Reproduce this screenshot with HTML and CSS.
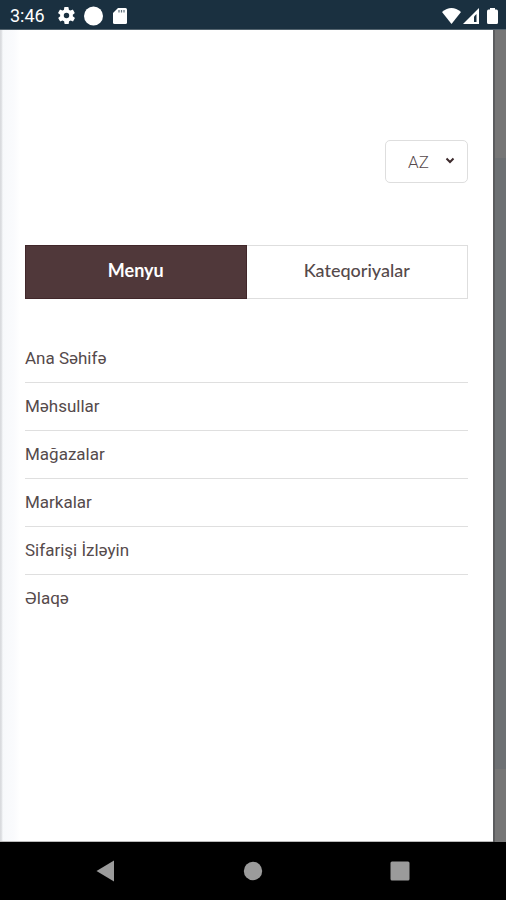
FILE: index.html
```html
<!DOCTYPE html>
<html lang="az">
<head>
<meta charset="utf-8">
<meta name="viewport" content="width=device-width, initial-scale=1">
<title>Menyu</title>
<link rel="stylesheet" href="styles.css">
</head>
<body>
<header class="status">
  <div class="status-group">
    <time class="clock">3:46</time>
    <svg class="gear" viewBox="2 2 20 20" width="17" height="17" aria-hidden="true"><path fill="#fff" d="M19.4 13a7.500 7.500 0 0 0 0-2l2.100-1.600a.5.5 0 0 0 .1-.6l-2-3.500a.5.5 0 0 0-.6-.2l-2.500 1a7.300 7.300 0 0 0-1.700-1l-.4-2.600a.5.5 0 0 0-.5-.5h-4a.5.5 0 0 0-.5.4l-.4 2.700a7.300 7.300 0 0 0-1.700 1l-2.500-1a.5.5 0 0 0-.6.2l-2 3.500a.5.5 0 0 0 .1.600L4.600 11a7.500 7.500 0 0 0 0 2l-2.100 1.600a.5.5 0 0 0-.1.600l2 3.500c.1.200.4.300.6.200l2.500-1c.5.400 1.100.7 1.700 1l.4 2.600c0 .3.200.5.500.5h4c.3 0 .5-.2.500-.4l.4-2.700a7.300 7.300 0 0 0 1.700-1l2.500 1c.2.100.5 0 .6-.2l2-3.500a.5.5 0 0 0-.1-.6zM12 15.200a3.200 3.200 0 1 1 0-6.400 3.200 3.200 0 0 1 0 6.400z"/></svg>
    <svg viewBox="0 0 20 20" width="20" height="20" aria-hidden="true"><circle cx="9.500" cy="10" r="9.500" fill="#fff"/></svg>
    <svg viewBox="0 0 14 16" width="14" height="16" aria-hidden="true"><path fill="#fff" d="M5 0h7.500Q14 0 14 1.500v13q0 1.500-1.500 1.500h-11Q0 16 0 14.500V5z"/><path stroke="#1a3040" stroke-opacity=".7" stroke-width="1.200" d="M6 2v2.500M8.500 2v2.500M11 2v2.500"/></svg>
  </div>
  <div class="status-group right">
    <svg viewBox="0 0 19 16" width="19" height="16" aria-hidden="true"><path fill="#fff" d="M0 4Q9.500-4 19 4L9.500 16z"/></svg>
    <svg viewBox="0 0 16 16" width="16" height="16" aria-hidden="true"><path fill="#fff" d="M0 16 16 0v16z"/><path fill="#1a3040" d="M11 8.500 13.500 6v8H11z"/></svg>
    <svg class="battery" viewBox="0 0 11 16" width="11" height="16" aria-hidden="true"><path fill="#fff" d="M3 0h5v1.500h1.500Q11 1.500 11 3.500v11Q11 16 9.500 16h-8Q0 16 0 14.500v-11Q0 1.500 1.500 1.500H3z"/></svg>
  </div>
</header>
<main class="screen">
  <section class="drawer">
    <div class="language">
      <select class="language-select" aria-label="Dil"><option>AZ</option></select>
      <svg class="chevron" viewBox="0 0 10 7" width="10" height="7" aria-hidden="true"><path d="M1.500 1.500 5 5l3.500-3.500" fill="none" stroke="#3d2a2c" stroke-width="2"/></svg>
    </div>
    <div class="tabs">
      <button class="tab active" type="button">Menyu</button>
      <button class="tab" type="button">Kateqoriyalar</button>
    </div>
    <nav class="menu">
      <a href="#">Ana Səhifə</a>
      <a href="#">Məhsullar</a>
      <a href="#">Mağazalar</a>
      <a href="#">Markalar</a>
      <a href="#">Sifarişi İzləyin</a>
      <a href="#">Əlaqə</a>
    </nav>
  </section>
  <div class="backdrop"></div>
</main>
<footer class="navbar">
  <button type="button" aria-label="Geri"><svg viewBox="0 0 20 22" width="20" height="22"><path fill="#9b9b9b" d="M.5 11 18 .5v21z"/></svg></button>
  <button type="button" aria-label="Ev"><svg viewBox="0 0 20 20" width="20" height="20"><circle cx="10" cy="10" r="9.200" fill="#9b9b9b"/></svg></button>
  <button type="button" aria-label="Son"><svg viewBox="0 0 20 20" width="20" height="20"><rect x=".5" y=".5" width="19" height="19" rx="1.500" fill="#9b9b9b"/></svg></button>
</footer>
</body>
</html>
```
FILE: styles.css
```css
* {
  box-sizing: border-box;
}

body {
  margin: 0;
  min-height: 100vh;
  display: flex;
  flex-direction: column;
  font-family: Roboto, sans-serif;
  color: #554a4b;
  background: #fff;
}

svg {
  display: block;
}

.status {
  height: 30px;
  padding: 1px 8px 0 10px;
  display: flex;
  align-items: center;
  justify-content: space-between;
  background: linear-gradient(#1a3040 29px, #53636e 29px);
}

.status-group {
  display: flex;
  align-items: center;
  gap: 9px;
}

.status-group.right {
  gap: 2px;
}

.clock {
  color: #fff;
  font-size: 18px;
  line-height: 24px;
}

.gear {
  margin-left: 4px;
}

.battery {
  margin-left: 6px;
}

.screen {
  flex: 1;
  display: flex;
}

.drawer {
  flex: 1;
  padding: 110px 25px 24px;
  background: linear-gradient(to right, #d9dbde 0, #d9dbde 1px, #f7f9fb 3px, #fafbfd 14px, #fff 20px);
  border-bottom: 1px solid #bbb;
}

.backdrop {
  width: 13px;
  border-left: 2px solid #5b5c5e;
  background: linear-gradient(#767676 128px, #6d7073 128px, #6d7073 calc(100% - 73px), #767676 calc(100% - 73px));
}

.language {
  position: relative;
  width: 83px;
  margin-left: auto;
}

.language-select {
  display: block;
  width: 100%;
  height: 43px;
  padding: 2px 22px;
  appearance: none;
  border: 1px solid #dedede;
  border-radius: 5px;
  background: #fff;
  color: #564a4c;
  font: 300 17px Roboto, sans-serif;
}

.chevron {
  position: absolute;
  right: 13px;
  top: 17px;
  pointer-events: none;
}

.tabs {
  display: grid;
  grid-template-columns: 1fr 1fr;
  margin: 62px 0 36px;
}

.tab {
  height: 54px;
  padding: 0 0 4px;
  border: 1px solid #dedede;
  border-left: 0;
  background: #fff;
  color: #554a4b;
  font: 500 18px Lato, sans-serif;
}

.tab.active {
  border: 1px solid #41272a;
  background: #50383a;
  color: #fff;
  font-weight: 700;
}

.menu a {
  display: block;
  height: 48px;
  line-height: 46px;
  border-bottom: 1px solid #dfdfdf;
  color: #554a4b;
  font-size: 17px;
  text-decoration: none;
}

.menu a:last-child {
  border-bottom: 0;
}

.navbar {
  height: 58px;
  padding: 0 96px;
  display: flex;
  align-items: center;
  justify-content: space-between;
  background: #000;
}

.navbar button {
  padding: 0;
  border: 0;
  background: none;
}
```
